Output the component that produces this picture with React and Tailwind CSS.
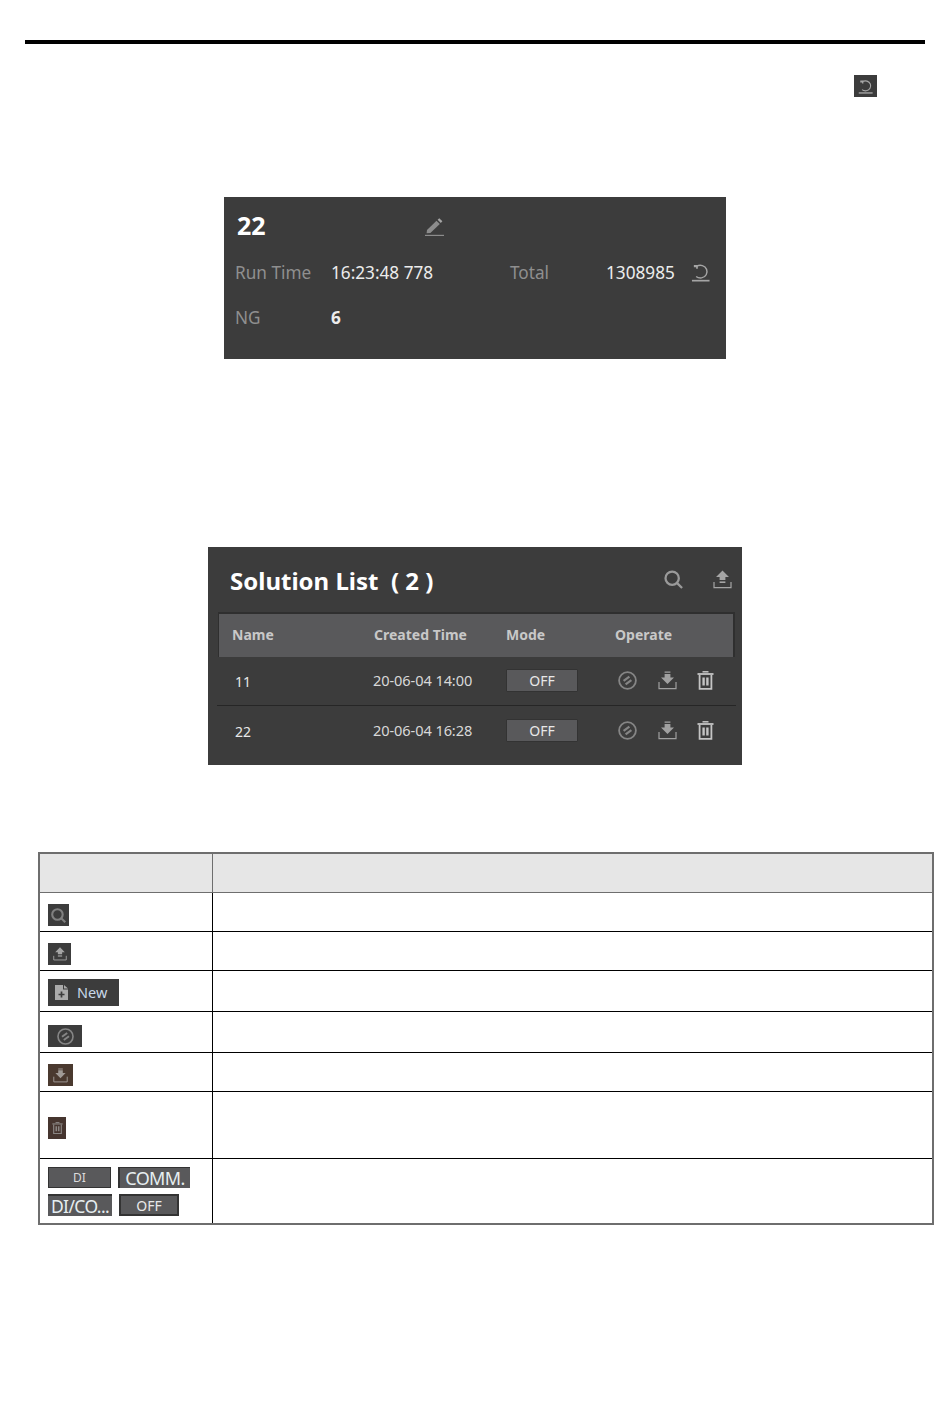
const FONT = "font-['Noto_Sans','Open_Sans',sans-serif]";

function ResetIcon({ size = 20, color = "#b5b5b5" }) {
  return (
    <svg width={size} height={size} viewBox="0 0 20 20" fill="none" stroke={color} strokeWidth="1.5">
      <path d="M6 3.2 C8 2.4 10 2.2 12 2.8 C16.4 4.2 18 8.6 16 12.4 C14 16.2 8.6 16.8 5.4 14.2" />
      <path d="M3 2 H7.2 V6 H5.4 V4.6 H3 Z" fill={color} stroke="none" />
      <path d="M1 18.6 H19.5" strokeWidth="1.8" />
    </svg>
  );
}
function PencilIcon() {
  return (
    <svg width="19" height="19" viewBox="0 0 19 19" fill="none">
      <path d="M2 13 L11.5 3.8 L14.8 7 L5.4 16 L1.6 16.2 Z" fill="#8c8c8c" />
      <path d="M12.6 2.8 L14.3 1.2 L17.4 4.2 L15.8 6 Z" fill="#a5a5a5" />
      <path d="M0 18.4 H19" stroke="#8c8c8c" strokeWidth="1.2" />
    </svg>
  );
}
function SearchIcon({ size = 20, color = "#9a9a9a", sw = 2.4 }) {
  return (
    <svg width={size} height={size} viewBox="0 0 20 20" fill="none" stroke={color} strokeWidth={sw}>
      <circle cx="8.6" cy="8.6" r="7" />
      <path d="M13.6 13.6 L19 19" />
    </svg>
  );
}
function UploadIcon({ size = 19, color = "#a5a5a5" }) {
  return (
    <svg width={size} height={size} viewBox="0 0 19 19" fill="none">
      <path d="M9.5 0.5 L16 7 H12.4 V10 H6.6 V7 H3 Z" fill={color} />
      <path d="M6.6 11.4 H12.4 V13 H6.6 Z" fill={color} />
      <path d="M1 12 V17.6 H18 V12" stroke={color} strokeWidth="1.2" />
    </svg>
  );
}
function DownloadIcon({ size = 19, color = "#a0a0a0" }) {
  return (
    <svg width={size} height={size} viewBox="0 0 19 19" fill="none">
      <path d="M6.6 0.5 H12.4 V1.8 H6.6 Z M6.6 3 H12.4 V6.4 H16 L9.5 13 L3 6.4 H6.6 Z" fill={color} />
      <path d="M1 11 V17.6 H18 V11" stroke={color} strokeWidth="1.2" />
    </svg>
  );
}
function TrashIcon({ size = 17, color = "#c4c4c4" }) {
  return (
    <svg width={size} height={size * 19 / 17} viewBox="0 0 17 19" fill="none">
      <path d="M5.5 0.8 H11.5" stroke={color} strokeWidth="1.5" />
      <path d="M0.5 3 H16.5" stroke={color} strokeWidth="1.8" />
      <path d="M2.6 4 V17.8 H14.4 V4" stroke={color} strokeWidth="1.8" />
      <path d="M6.6 6.5 V14.5 M10.4 6.5 V14.5" stroke={color} strokeWidth="2.4" />
    </svg>
  );
}
function ModeIcon({ size = 19, color = "#858585" }) {
  return (
    <svg width={size} height={size} viewBox="0 0 19 19" fill="none">
      <circle cx="9.5" cy="9.5" r="8.4" stroke={color} strokeWidth="1.8" />
      <path d="M5.6 9.8 L11.4 5.6 M13.4 9.2 L7.6 13.4" stroke={color} strokeWidth="2.2" />
    </svg>
  );
}
function NewDocIcon() {
  return (
    <svg width="13" height="15" viewBox="0 0 13 15" fill="none">
      <path d="M0 0 H8 V4.5 H13 V15 H0 Z" fill="#ababab" />
      <path d="M9 0 L13 3.6 H9 Z" fill="#ababab" />
      <path d="M6.5 6.5 V12.5 M3.5 9.5 H9.5" stroke="#3c3c3c" strokeWidth="1.7" />
    </svg>
  );
}

function OffButton() {
  return (
    <div className="flex h-[23px] w-[72px] items-center justify-center rounded-[1px] border border-[#333333] bg-[#59595b] text-[14px] text-[#e8e8e8]">
      OFF
    </div>
  );
}

function SolutionRow({ name, time }) {
  return (
    <div className="flex h-[48px] items-center pb-[2px]">
      <div className="w-[156px] pl-[18px] pt-[2px] text-[14px] text-[#e8e8e8]">{name}</div>
      <div className="w-[133px] pt-[2px] text-[14.6px] tracking-[-0.1px] text-[#d8d8d8]">{time}</div>
      <div className="w-[112px]"><OffButton /></div>
      <div className="flex items-center">
        <ModeIcon />
        <div className="ml-[21px]"><DownloadIcon /></div>
        <div className="ml-[20px]"><TrashIcon /></div>
      </div>
    </div>
  );
}

function Chip({ className = "", children }) {
  return <div className={`flex items-center justify-center ${className}`}>{children}</div>;
}

function Row({ h, children }) {
  return (
    <tr className={h}>
      <td className="border border-black px-[8px] align-middle">{children}</td>
      <td className="border border-black"></td>
    </tr>
  );
}

export default function App() {
  return (
    <div className={`${FONT} min-h-[1408px] w-[950px] bg-white pt-[40px]`}>
      <div className="mx-[25px] h-[4px] bg-black" />

      <div className="mt-[31px] ml-[854px] flex h-[22px] w-[23px] items-center justify-center bg-[#3c3c3c]">
        <ResetIcon size={15} color="#a8a8a8" />
      </div>

      <section className="mx-auto mt-[100px] h-[162px] w-[502px] bg-[#3c3c3c]">
        <div className="flex h-[61px] items-center pb-[4px]">
          <div className="ml-[13px] w-[188px] text-[25px] font-bold leading-none text-white">22</div>
          <div className="mt-[2px]"><PencilIcon /></div>
        </div>
        <div className="flex h-[30px] items-center pb-[1px] pl-[11px] text-[17.2px]">
          <div className="w-[96px] text-[#8f8f8f]">Run Time</div>
          <div className="w-[179px] text-[#ececec]">16:23:48 778</div>
          <div className="w-[96px] text-[#8f8f8f]">Total</div>
          <div className="w-[85px] text-[#ececec]">1308985</div>
          <ResetIcon size={19} color="#a5a5a5" />
        </div>
        <div className="mt-[15px] flex h-[30px] items-center pb-[1px] pl-[11px] text-[17.2px]">
          <div className="w-[96px] text-[#8f8f8f]">NG</div>
          <div className="font-bold text-[#ececec]">6</div>
        </div>
      </section>

      <section className="mx-auto mt-[188px] h-[218px] w-[534px] bg-[#3c3c3c]">
        <div className="flex h-[65px] items-center pr-[10px]">
          <div className="ml-[22px] flex-1 pt-[2px] whitespace-pre text-[24px] font-bold leading-none text-white">
            {"Solution List  ( 2 )"}
          </div>
          <SearchIcon size={19} />
          <div className="ml-[30px]"><UploadIcon /></div>
        </div>
        <div className="ml-[10px] flex h-[45px] w-[517px] items-center border-t-2 border-r-2 border-l border-[#2f2f2f] bg-[#59595b] pb-[3px] text-[14px] font-bold text-[#c8c8c8]">
          <div className="w-[155px] pl-[13px]">Name</div>
          <div className="w-[132px]">Created Time</div>
          <div className="w-[109px]">Mode</div>
          <div>Operate</div>
        </div>
        <div className="ml-[9px] w-[519px] text-left">
          <SolutionRow name="11" time="20-06-04 14:00" />
          <div className="h-[1px] bg-[#262626]" />
          <div className="pt-[1px]"><SolutionRow name="22" time="20-06-04 16:28" /></div>
        </div>
      </section>

      <table className="mt-[87px] ml-[38px] w-[896px] table-fixed border-collapse border-2 border-[#6e6e6e]">
        <colgroup>
          <col className="w-[173px]" />
          <col />
        </colgroup>
        <tbody>
          <tr className="h-[39px] bg-[#e6e6e6]">
            <td className="border border-[#6e6e6e]"></td>
            <td className="border border-[#6e6e6e]"></td>
          </tr>
          <Row h="h-[39px]">
            <Chip className="mt-[7px] h-[22px] w-[21px] bg-[#3c3c3c]"><SearchIcon size={15} color="#808080" sw={2.8} /></Chip>
          </Row>
          <Row h="h-[39px]">
            <Chip className="mt-[7px] h-[22px] w-[23px] bg-[#3c3c3c]"><UploadIcon size={14} color="#a5a5a5" /></Chip>
          </Row>
          <Row h="h-[41px]">
            <div className="mt-[4px] flex h-[27px] w-[71px] items-center bg-[#3c3c3c] pl-[7px] text-[14.5px] text-[#c8d8e8]">
              <NewDocIcon />
              <span className="ml-[9px]">New</span>
            </div>
          </Row>
          <Row h="h-[41px]">
            <Chip className="mt-[9px] h-[22px] w-[34px] bg-[#3c3c3c]"><ModeIcon size={17} color="#858585" /></Chip>
          </Row>
          <Row h="h-[39px]">
            <Chip className="mt-[7px] h-[22px] w-[25px] bg-[#4a392f]"><DownloadIcon size={15} color="#a09a96" /></Chip>
          </Row>
          <Row h="h-[67px]">
            <Chip className="mt-[7px] h-[22px] w-[18px] bg-[#46352f]"><TrashIcon size={11} color="#8a8583" /></Chip>
          </Row>
          <Row h="h-[66px]">
            <div className="flex items-center pt-[2px]">
              <Chip className="h-[21px] w-[63px] border border-[#333333] bg-[#59595b] text-[12px] text-[#dcdcdc]">DI</Chip>
              <Chip className="ml-[7px] h-[21px] w-[72px] border-t border-l-2 border-[#333333] bg-[#59595b] text-[18px] leading-none tracking-[-0.6px] whitespace-nowrap text-[#e6eef0]">COMM.</Chip>
            </div>
            <div className="mt-[6px] flex items-center">
              <Chip className="h-[22px] w-[64px] border-t-2 border-[#333333] bg-[#59595b] text-[17.5px] leading-none tracking-[-0.6px] whitespace-nowrap text-[#e6eef0]">DI/CO...</Chip>
              <Chip className="ml-[7px] h-[22px] w-[60px] border-2 border-[#333333] bg-[#59595b] text-[14px] text-[#e8e8e8]">OFF</Chip>
            </div>
          </Row>
        </tbody>
      </table>
    </div>
  );
}
